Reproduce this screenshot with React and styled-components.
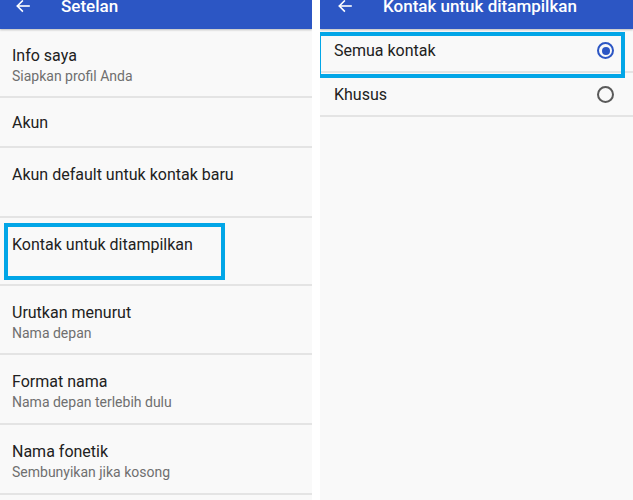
import React from "react"
import styled, { createGlobalStyle } from "styled-components"

const GlobalStyle = createGlobalStyle`
  body {
    margin: 0;
    background: #ffffff;
    font-family: Roboto, "Noto Sans", sans-serif;
  }
`

const Screen = styled.div`
  display: flex;
  gap: 8px;
  width: 633px;
  height: 500px;
  overflow: hidden;
  background: #ffffff;
`

const Panel = styled.div`
  position: relative;
  display: flex;
  flex-direction: column;
  width: ${p => p.width || "auto"};
  flex: ${p => (p.width ? "none" : "1")};
  background: #f9f9f9;
  overflow: hidden;
`

const AppBar = styled.div`
  height: 29px;
  flex: none;
  overflow: hidden;
  background: #2c56c4;
  box-shadow: 0 1px 2px rgba(0, 0, 0, 0.25);
  position: relative;
  z-index: 1;
`

const AppBarInner = styled.div`
  display: flex;
  align-items: center;
  height: 56px;
  margin-top: -22px;
  padding-left: ${p => p.pad || "15px"};
  color: #ffffff;
`

const BackIcon = styled.svg`
  width: 16px;
  height: 16px;
  flex: none;
`

const AppBarTitle = styled.div`
  margin-left: ${p => p.gap || "30px"};
  font-size: 17px;
  font-weight: 500;
  line-height: 20px;
  white-space: nowrap;
`

const List = styled.div`
  display: flex;
  flex-direction: column;
`

const Row = styled.div`
  display: flex;
  flex-direction: column;
  justify-content: ${p => (p.center ? "center" : "flex-start")};
  height: ${p => p.h}px;
  box-sizing: border-box;
  padding: ${p => (p.center ? "1px 12px 0" : "17px 12px 0")};
  border-bottom: 2px solid #e4e4e4;
  flex: none;
`

const Title = styled.div`
  font-size: 16px;
  line-height: 20px;
  color: #212121;
`

const Summary = styled.div`
  font-size: 14px;
  line-height: 20px;
  color: #6f6f6f;
`

const ChoiceRow = styled.div`
  display: flex;
  align-items: center;
  justify-content: space-between;
  height: 44px;
  box-sizing: border-box;
  padding: 1px 19px 0 14px;
  border-bottom: 2px solid #e4e4e4;
  flex: none;
`

const Radio = styled.span`
  position: relative;
  width: 17px;
  height: 17px;
  box-sizing: border-box;
  border-radius: 50%;
  border: 2px solid ${p => (p.checked ? "#2c56c4" : "#5a5a5a")};

  &::after {
    content: "";
    display: ${p => (p.checked ? "block" : "none")};
    position: absolute;
    left: 2.5px;
    top: 2.5px;
    width: 8px;
    height: 8px;
    border-radius: 50%;
    background: #2c56c4;
  }
`

const Highlight = styled.div`
  position: absolute;
  left: ${p => p.x}px;
  top: ${p => p.y}px;
  width: ${p => p.w}px;
  height: ${p => p.h}px;
  box-sizing: border-box;
  border: 4.5px solid #02a6e7;
  z-index: 2;
`

const Back = () => (
  <BackIcon viewBox="0 0 24 24" fill="none" stroke="#ffffff" strokeWidth="2.4" strokeLinecap="square">
    <path d="M21 12H4" />
    <path d="M11 4.5L3.5 12L11 19.5" />
  </BackIcon>
)

const settings = [
  { title: "Info saya", summary: "Siapkan profil Anda", h: 69 },
  { title: "Akun", h: 50, center: true },
  { title: "Akun default untuk kontak baru", h: 70 },
  { title: "Kontak untuk ditampilkan", h: 68 },
  { title: "Urutkan menurut", summary: "Nama depan", h: 69 },
  { title: "Format nama", summary: "Nama depan terlebih dulu", h: 70 },
  { title: "Nama fonetik", summary: "Sembunyikan jika kosong", h: 70 },
  { title: "", h: 70 },
]

const choices = [
  { label: "Semua kontak", checked: true },
  { label: "Khusus", checked: false },
]

export default function App() {
  return (
    <>
      <GlobalStyle />
      <Screen>
        <Panel width="312px">
          <AppBar>
            <AppBarInner>
              <Back />
              <AppBarTitle>Setelan</AppBarTitle>
            </AppBarInner>
          </AppBar>
          <List>
            {settings.map((s, i) => (
              <Row key={i} h={s.h} center={s.center}>
                {s.title && <Title>{s.title}</Title>}
                {s.summary && <Summary>{s.summary}</Summary>}
              </Row>
            ))}
          </List>
          <Highlight x={4} y={223} w={221} h={57} />
        </Panel>
        <Panel>
          <AppBar>
            <AppBarInner pad="17px">
              <Back />
              <AppBarTitle gap="30px">Kontak untuk ditampilkan</AppBarTitle>
            </AppBarInner>
          </AppBar>
          <List>
            {choices.map(c => (
              <ChoiceRow key={c.label}>
                <Title>{c.label}</Title>
                <Radio checked={c.checked} />
              </ChoiceRow>
            ))}
          </List>
          <Highlight x={-3} y={32} w={308} h={46} />
        </Panel>
      </Screen>
    </>
  )
}
